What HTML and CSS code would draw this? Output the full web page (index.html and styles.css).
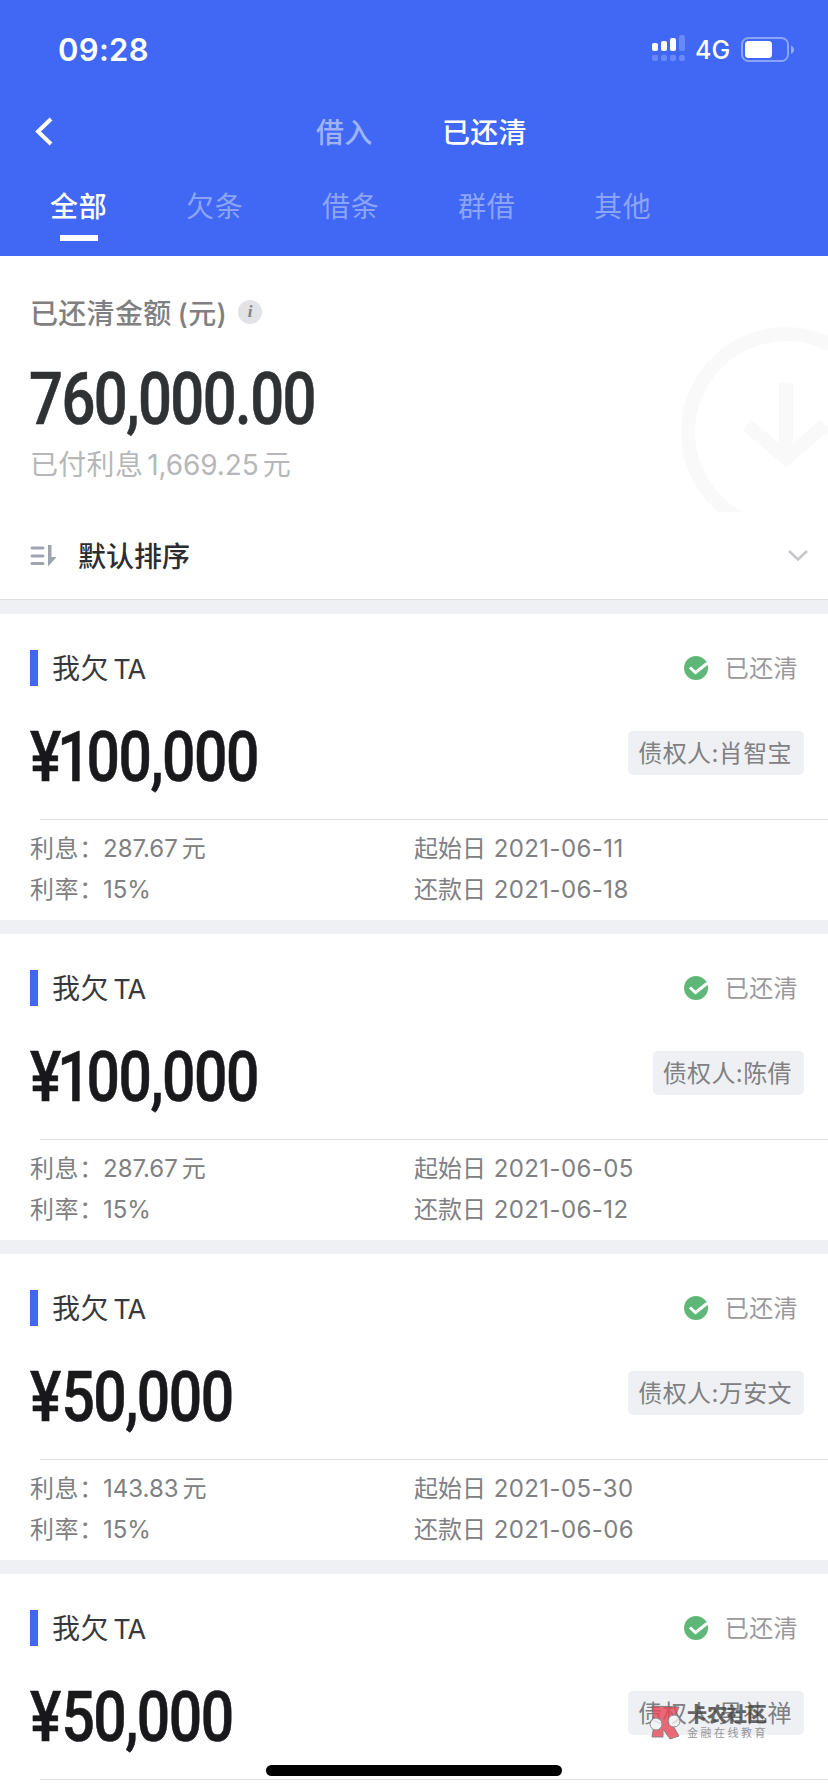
FILE: index.html
```html
<!DOCTYPE html>
<html lang="zh-CN">
<head>
<meta charset="utf-8">
<title>已还清</title>
<link rel="stylesheet" href="styles.css">
</head>
<body>
<div class="screen">
  <header class="header">
    <div class="status-bar">
      <span class="time">09:28</span>
      <div class="indicators">
        <svg class="signal" width="34" height="27" viewBox="0 0 34 27" fill="#fff">
          <rect x="0" y="8" width="6" height="8" rx="2"/><rect x="9" y="6" width="6" height="10" rx="2"/><rect x="18" y="3" width="6" height="13" rx="2"/>
          <g opacity=".22"><rect x="27" y="0" width="6" height="16" rx="2"/><rect x="0" y="20" width="6" height="6" rx="2"/><rect x="9" y="20" width="6" height="6" rx="2"/><rect x="18" y="20" width="6" height="6" rx="2"/><rect x="27" y="20" width="6" height="6" rx="2"/></g>
        </svg>
        <span class="network">4G</span>
        <svg class="battery" width="54" height="26" viewBox="0 0 54 26">
          <rect x="1" y="1" width="46" height="23" rx="6.5" fill="none" stroke="#fff" stroke-opacity=".4" stroke-width="2"/>
          <rect x="4" y="4" width="27" height="17" rx="3.5" fill="#fff"/>
          <path d="M50 8.500c4 1.500 4 7 0 8.500z" fill="#fff" fill-opacity=".45"/>
        </svg>
      </div>
    </div>
    <nav class="nav">
      <svg class="back" width="20" height="30" viewBox="0 0 20 30"><path d="M17 2 4 14.500 17 27" fill="none" stroke="#fff" stroke-width="4"/></svg>
      <span class="nav-item">借入</span>
      <span class="nav-item active">已还清</span>
    </nav>
    <div class="tabs">
      <span class="tab active">全部</span><span class="tab">欠条</span><span class="tab">借条</span><span class="tab">群借</span><span class="tab">其他</span>
    </div>
  </header>

  <section class="summary">
    <div class="summary-title">已还清金额<span class="paren">(元)</span><span class="info">i</span></div>
    <div class="total">760,000.00</div>
    <div class="paid">已付利息<span class="paid-num">1,669.25</span>元</div>
    <svg class="summary-art" width="148" height="185" viewBox="0 0 148 185" fill="none" stroke="#f9f9f9" stroke-width="14">
      <circle cx="106" cy="105" r="98"/><path d="M106 56v78M67 98l39 33 39-33"/>
    </svg>
  </section>

  <div class="sort">
    <svg width="27" height="22" viewBox="0 0 27 22"><path d="M2 3h11M2 11h11M2 18.500h11" stroke="#9da4b0" stroke-width="3" stroke-linecap="round"/><path d="M18 0h3.500v12h5L18 21.500z" fill="#9da4b0"/></svg>
    <span class="sort-label">默认排序</span>
    <svg class="chevron" width="20" height="14" viewBox="0 0 20 14"><path d="M1 2l9 8.500L19 2" fill="none" stroke="#c7c7cb" stroke-width="2.500"/></svg>
  </div>

  <main class="list">
    <article class="card">
      <div class="card-head"><span class="bar"></span><span class="kind">我欠<span class="latin">TA</span></span><svg class="check" width="24" height="24" viewBox="0 0 24 24"><circle cx="12" cy="12" r="12" fill="#5fb878"/><path d="M6 11.500l5.500 5L23 7.500" fill="none" stroke="#fff" stroke-width="3"/></svg><span class="state">已还清</span></div>
      <div class="card-main"><span class="amount"><span class="yen">¥</span><span class="one">1</span>00,000</span><span class="creditor">债权人:肖智宝</span></div>
      <div class="details"><span class="cell"><span class="label">利息：</span>287.67<span class="unit">元</span></span><span class="cell">起始日 <span class="date">2021-06-11</span></span><span class="cell"><span class="label">利率：</span>15%</span><span class="cell">还款日 <span class="date">2021-06-18</span></span></div>
    </article>
    <article class="card">
      <div class="card-head"><span class="bar"></span><span class="kind">我欠<span class="latin">TA</span></span><svg class="check" width="24" height="24" viewBox="0 0 24 24"><circle cx="12" cy="12" r="12" fill="#5fb878"/><path d="M6 11.500l5.500 5L23 7.500" fill="none" stroke="#fff" stroke-width="3"/></svg><span class="state">已还清</span></div>
      <div class="card-main"><span class="amount"><span class="yen">¥</span><span class="one">1</span>00,000</span><span class="creditor">债权人:陈倩</span></div>
      <div class="details"><span class="cell"><span class="label">利息：</span>287.67<span class="unit">元</span></span><span class="cell">起始日 <span class="date">2021-06-05</span></span><span class="cell"><span class="label">利率：</span>15%</span><span class="cell">还款日 <span class="date">2021-06-12</span></span></div>
    </article>
    <article class="card">
      <div class="card-head"><span class="bar"></span><span class="kind">我欠<span class="latin">TA</span></span><svg class="check" width="24" height="24" viewBox="0 0 24 24"><circle cx="12" cy="12" r="12" fill="#5fb878"/><path d="M6 11.500l5.500 5L23 7.500" fill="none" stroke="#fff" stroke-width="3"/></svg><span class="state">已还清</span></div>
      <div class="card-main"><span class="amount"><span class="yen wide">¥</span>50,000</span><span class="creditor">债权人:万安文</span></div>
      <div class="details"><span class="cell"><span class="label">利息：</span>143.83<span class="unit">元</span></span><span class="cell">起始日 <span class="date">2021-05-30</span></span><span class="cell"><span class="label">利率：</span>15%</span><span class="cell">还款日 <span class="date">2021-06-06</span></span></div>
    </article>
    <article class="card">
      <div class="card-head"><span class="bar"></span><span class="kind">我欠<span class="latin">TA</span></span><svg class="check" width="24" height="24" viewBox="0 0 24 24"><circle cx="12" cy="12" r="12" fill="#5fb878"/><path d="M6 11.500l5.500 5L23 7.500" fill="none" stroke="#fff" stroke-width="3"/></svg><span class="state">已还清</span></div>
      <div class="card-main"><span class="amount"><span class="yen wide">¥</span>50,000</span><span class="creditor">债权人:吴礼禅</span></div>
      <div class="details"></div>
    </article>
  </main>

  <div class="watermark">
    <svg width="34" height="36" viewBox="0 0 34 36"><path d="M4 2l27 1-7 17 7 12-9 3-7-10v8H4l2-12z" fill="#ea4656" stroke="#666" stroke-width="1"/><circle cx="8" cy="20" r="6" fill="#f3f4f6" stroke="#777"/><circle cx="26" cy="17" r="6" fill="#f3f4f6" stroke="#777"/></svg>
    <div class="brand"><span class="brand-name">卡农社区</span><span class="brand-sub">金融在线教育</span></div>
  </div>
  <div class="home-indicator"></div>
</div>
</body>
</html>
```
FILE: styles.css
```css
* { box-sizing: border-box; }
body {
  margin: 0;
  font-family: Inter, "Noto Sans CJK SC", sans-serif;
  font-size: 24px;
  color: #808082;
  background: #eff0f4;
}
.screen { position: relative; width: 828px; height: 1792px; overflow: hidden; }

.header { height: 256px; background: #4068f4; color: #fff; }
.status-bar { height: 100px; padding: 0 33px 0 58px; display: flex; justify-content: space-between; align-items: center; }
.time { font-size: 31px; font-weight: 600; letter-spacing: .3px; line-height: 40px; }
.indicators { display: flex; align-items: center; }
.signal { margin-top: -3px; }
.network { font-size: 25px; font-weight: 500; margin-left: 9px; width: 46px; line-height: 30px; }
.nav { height: 66px; padding-left: 34px; display: flex; align-items: center; font-size: 28px; letter-spacing: .3px; }
.nav-item { font-weight: 500; color: #9fb3f9; width: 126px; line-height: 40px; }
.nav-item.active { color: #fff; }
.back { margin: -2px 262px 0 0; }
.tabs { height: 90px; padding-left: 50px; display: flex; font-size: 28px; letter-spacing: .7px; color: #8ca4f8; }
.tab { width: 136px; padding-top: 21px; line-height: 40px; }
.tab.active { color: #fff; font-weight: 500; }
.tab.active::after { content: ""; display: block; width: 38px; height: 6px; margin: 8px 0 0 10px; background: #fff; }

.summary { position: relative; height: 256px; padding: 36px 0 0 30px; background: #fff; }
.summary-title { display: flex; align-items: center; height: 40px; font-size: 28px; font-weight: 500; letter-spacing: .3px; }
.paren { margin-left: 6px; }
.info { width: 24px; height: 24px; margin-left: 11px; border-radius: 50%; background: #e1e3e7; font: italic bold 17px/24px "Liberation Serif", serif; text-align: center; letter-spacing: 0; }
.total { width: max-content; height: 84px; margin: 26px 0 0 -1px; font: 500 72px/84px Roboto, sans-serif; letter-spacing: -1.900px; color: #303133; -webkit-text-stroke: .6px #303133; transform: scaleX(.83); transform-origin: 0 50%; }
.paid { height: 40px; margin-top: 3px; font-size: 28px; line-height: 40px; letter-spacing: .3px; color: #b7b7b9; }
.paid-num { margin: 0 4px; letter-spacing: -.1px; }
.summary-art { position: absolute; right: 0; bottom: 0; }

.sort { height: 88px; padding: 0 20px 0 30px; display: flex; align-items: center; background: #fff; border-bottom: 1px solid #dfdfe1; }
.sort-label { margin: 2px 0 0 21px; font-size: 28px; font-weight: 500; line-height: 40px; color: #2d2d30; }
.chevron { margin: 1px 0 0 auto; }

.list { display: flex; flex-direction: column; gap: 14px; padding-top: 14px; }
.card { height: 306px; background: #fff; }
.card-head { height: 108px; padding: 0 30px; display: flex; align-items: center; }
.bar { width: 8px; height: 36px; background: #4068f0; }
.kind { margin: 2px 0 0 14px; font-size: 28px; letter-spacing: .6px; line-height: 40px; color: #37383b; }
.latin { margin-left: 4px; font-size: 27px; letter-spacing: -.8px; }
.check { margin-left: auto; }
.state { margin: 2px 0 0 17px; letter-spacing: .4px; line-height: 36px; color: #99999b; }
.card-main { height: 98px; padding: 0 24px 0 30px; display: flex; justify-content: space-between; }
.amount { height: 82px; margin-top: -6px; font: 500 70px/82px Roboto, sans-serif; letter-spacing: -1.800px; color: #19191b; -webkit-text-stroke: .6px #19191b; transform: scaleX(.84); transform-origin: 0 50%; }
.yen { margin-right: -3px; }
.yen.wide { margin-right: 2px; }
.one { margin-right: -3px; }
.creditor { height: 44px; margin-top: 9px; padding: 1px 12px 0 10px; border-radius: 5px; background: #eff0f4; letter-spacing: .4px; line-height: 44px; }
.details { height: 101px; margin: -1px 0 0 30px; padding-top: 9px; display: grid; grid-template-columns: 384px 1fr; grid-template-rows: 41px 41px; line-height: 41px; background: linear-gradient(#e0e0e2, #e0e0e2) 10px 0 / 100% 1px no-repeat; }
.cell { white-space: nowrap; letter-spacing: 0; }
.label { display: inline-block; width: 73px; letter-spacing: .6px; }
.unit { margin-left: 4px; }
.date { margin-left: 1px; letter-spacing: .4px; }

.watermark { position: absolute; left: 648px; top: 1704px; display: flex; opacity: .8; }
.brand { margin-left: 5px; display: flex; flex-direction: column; }
.brand-name { font-size: 20px; font-weight: 900; line-height: 23px; color: #444; }
.brand-sub { font-size: 11px; letter-spacing: 2.500px; line-height: 12px; }
.home-indicator { position: absolute; left: 266px; top: 1765px; width: 296px; height: 11px; border-radius: 6px; background: #000; }
```
